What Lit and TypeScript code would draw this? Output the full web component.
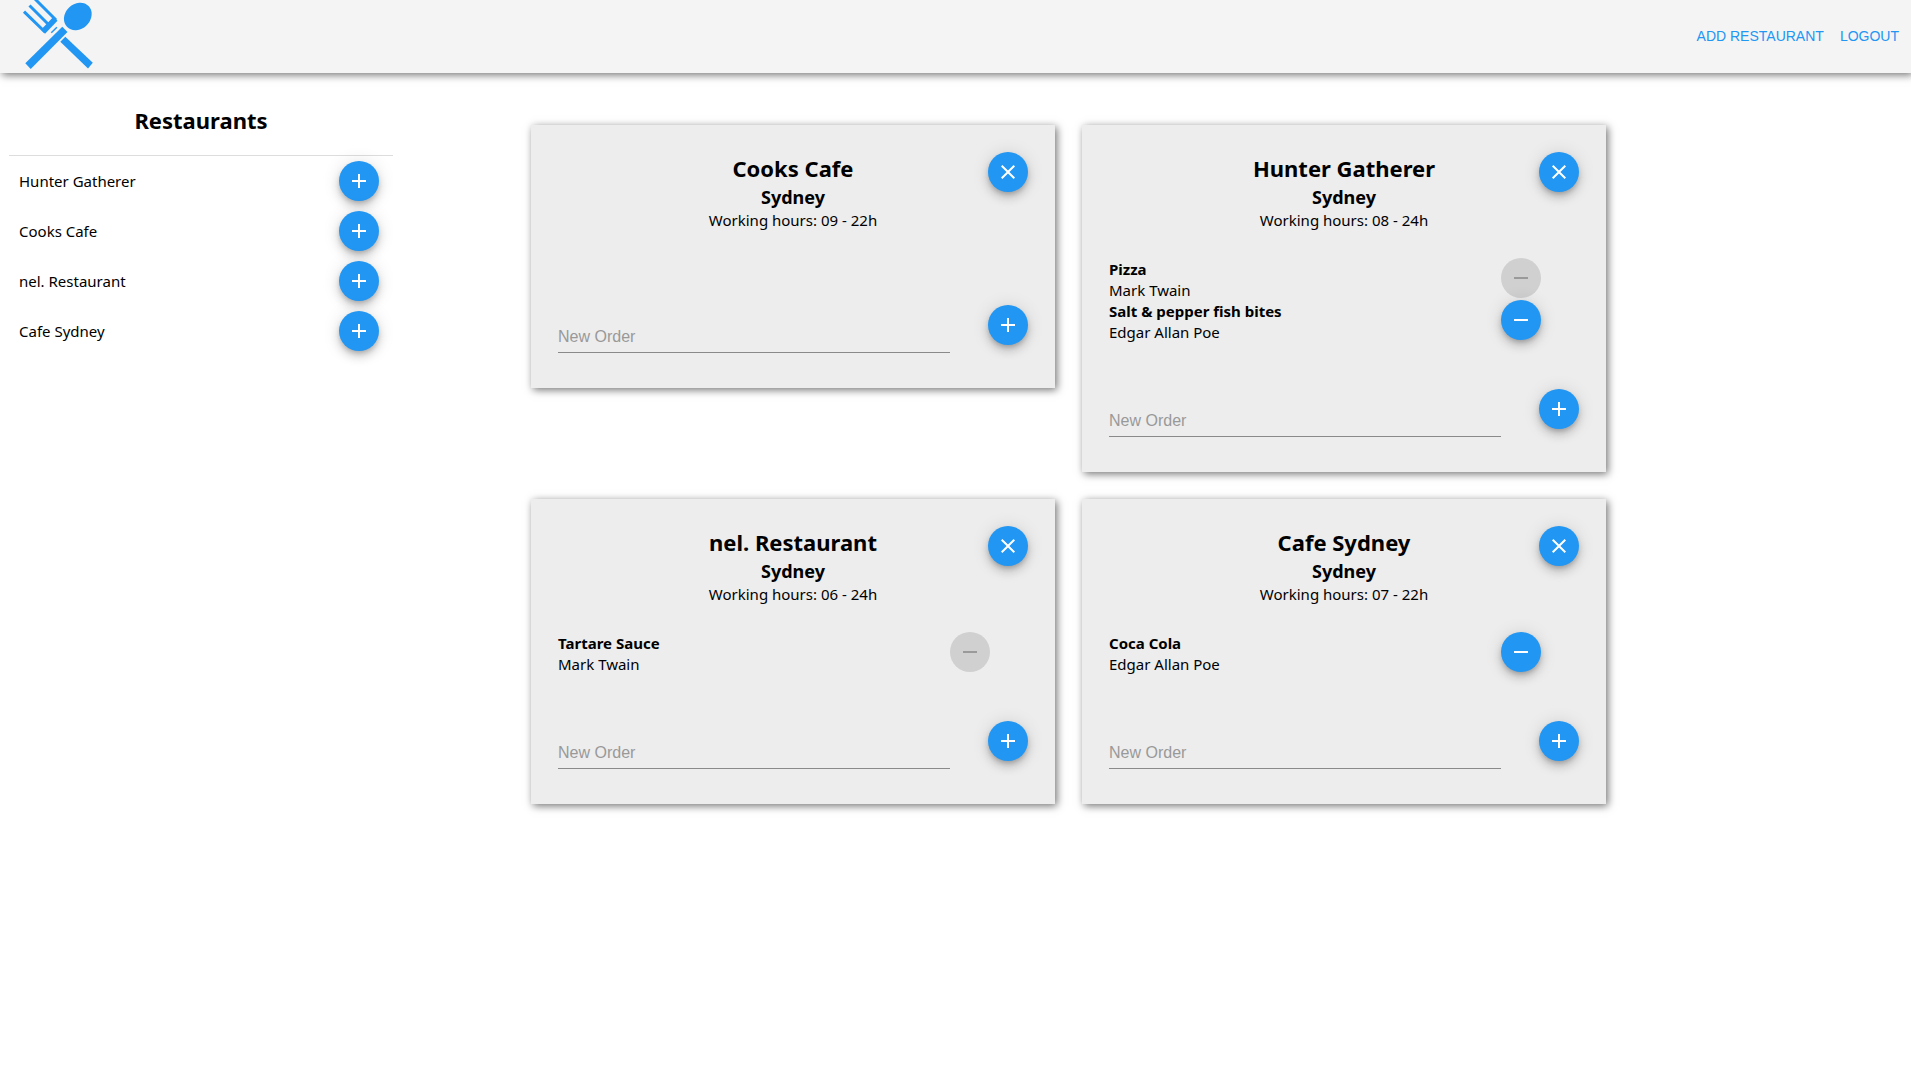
import { LitElement, html, css, svg } from "lit";
import { customElement, property } from "lit/decorators.js";

interface Order {
  meal: string;
  person: string;
  own: boolean;
}

interface Restaurant {
  name: string;
  city: string;
  hours: string;
  orders: Order[];
}

const RESTAURANTS: Restaurant[] = [
  { name: "Cooks Cafe", city: "Sydney", hours: "09 - 22h", orders: [] },
  {
    name: "Hunter Gatherer",
    city: "Sydney",
    hours: "08 - 24h",
    orders: [
      { meal: "Pizza", person: "Mark Twain", own: false },
      { meal: "Salt & pepper fish bites", person: "Edgar Allan Poe", own: true },
    ],
  },
  {
    name: "nel. Restaurant",
    city: "Sydney",
    hours: "06 - 24h",
    orders: [{ meal: "Tartare Sauce", person: "Mark Twain", own: false }],
  },
  {
    name: "Cafe Sydney",
    city: "Sydney",
    hours: "07 - 22h",
    orders: [{ meal: "Coca Cola", person: "Edgar Allan Poe", own: true }],
  },
];

const SIDEBAR_NAMES = ["Hunter Gatherer", "Cooks Cafe", "nel. Restaurant", "Cafe Sydney"];

const ICONS = {
  add: svg`<path d="M19 13h-6v6h-2v-6H5v-2h6V5h2v6h6z"/>`,
  remove: svg`<path d="M5 11h14v2H5z"/>`,
  close: svg`<path d="M19 6.4 17.6 5 12 10.6 6.4 5 5 6.4 10.6 12 5 17.6 6.4 19 12 13.4 17.6 19 19 17.6 13.4 12z"/>`,
};

@customElement("round-button")
export class RoundButton extends LitElement {
  @property() icon: keyof typeof ICONS = "add";
  @property() label = "";
  @property({ type: Boolean }) disabled = false;

  static styles = css`
    :host {
      display: block;
      flex: none;
      width: 40px;
      height: 40px;
    }
    .button {
      display: flex;
      align-items: center;
      justify-content: center;
      width: 40px;
      height: 40px;
      padding: 0;
      border: 0;
      border-radius: 50%;
      background: #2196f3;
      color: #fff;
      cursor: pointer;
      box-shadow:
        0 3px 5px -1px rgba(0, 0, 0, 0.2),
        0 6px 10px 0 rgba(0, 0, 0, 0.14),
        0 1px 18px 0 rgba(0, 0, 0, 0.12);
    }
    .button:disabled {
      background: rgba(0, 0, 0, 0.12);
      color: rgba(0, 0, 0, 0.26);
      box-shadow: none;
      cursor: default;
    }
    .icon {
      width: 24px;
      height: 24px;
      fill: currentColor;
    }
  `;

  render() {
    return html`
      <button class="button" aria-label=${this.label} ?disabled=${this.disabled}>
        <svg class="icon" viewBox="0 0 24 24" aria-hidden="true">${ICONS[this.icon]}</svg>
      </button>
    `;
  }
}

@customElement("restaurant-card")
export class RestaurantCard extends LitElement {
  @property({ attribute: false }) restaurant!: Restaurant;

  static styles = css`
    :host {
      display: block;
    }
    .card {
      padding: 27px;
      background: #ededed;
      box-shadow: 2px 2px 8px rgba(0, 0, 0, 0.55);
    }
    .top {
      display: grid;
      grid-template-columns: 40px 1fr 40px;
    }
    .heading {
      grid-column: 2;
      text-align: center;
    }
    .name {
      margin: 0;
      font-size: 22px;
      line-height: 32px;
    }
    .city {
      margin: 0;
      font-size: 18px;
      line-height: 26px;
    }
    .hours {
      margin: 0;
      line-height: 21px;
    }
    .orders {
      margin: 0;
      padding: 27px 0 47px;
      list-style: none;
    }
    .order {
      display: grid;
      grid-template-columns: 10fr 2fr;
      height: 42px;
    }
    .meal,
    .person {
      display: block;
      line-height: 21px;
    }
    .meal {
      padding-top: 1px;
      font-weight: bold;
    }
    .form {
      display: grid;
      grid-template-columns: 10fr 2fr;
      height: 56px;
    }
    .form round-button {
      justify-self: end;
    }
    .field {
      align-self: start;
      box-sizing: border-box;
      width: 100%;
      height: 33px;
      margin-top: 15px;
      padding: 2px 0 0;
      border: 0;
      border-bottom: 1px solid #8a8a8a;
      border-radius: 0;
      outline: 0;
      background: none;
      font: 16px "Liberation Sans", Arial, sans-serif;
    }
    .field::placeholder {
      color: #999;
      opacity: 1;
    }
  `;

  render() {
    const r = this.restaurant;
    return html`
      <article class="card">
        <header class="top">
          <div class="heading">
            <h2 class="name">${r.name}</h2>
            <h3 class="city">${r.city}</h3>
            <p class="hours">Working hours: ${r.hours}</p>
          </div>
          <round-button icon="close" label="Close"></round-button>
        </header>
        <ul class="orders">
          ${r.orders.map(
            (o) => html`
              <li class="order">
                <div>
                  <span class="meal">${o.meal}</span>
                  <span class="person">${o.person}</span>
                </div>
                <round-button icon="remove" label="Remove" ?disabled=${!o.own}></round-button>
              </li>
            `,
          )}
        </ul>
        <form class="form" @submit=${(e: Event) => e.preventDefault()}>
          <input class="field" type="text" placeholder="New Order" aria-label="New Order" />
          <round-button icon="add" label="Add"></round-button>
        </form>
      </article>
    `;
  }
}

@customElement("app-root")
export class AppRoot extends LitElement {
  static styles = css`
    :host {
      display: block;
      min-height: 100vh;
      background: #fff;
      color: #000;
      font: 15px "Segoe UI", "Noto Sans", "Open Sans", sans-serif;
    }
    .bar {
      display: flex;
      align-items: center;
      justify-content: space-between;
      height: 73px;
      padding: 0 12px 0 23px;
      background: #f4f4f4;
      box-shadow: 2px 2px 8px rgba(0, 0, 0, 0.55);
    }
    .brand,
    .logo {
      display: block;
    }
    .logo {
      width: 70px;
      height: 73px;
      overflow: visible;
      fill: #2196f3;
    }
    .tines {
      fill: none;
      stroke: #2196f3;
      stroke-width: 3;
    }
    .notch {
      fill: none;
      stroke: #2196f3;
      stroke-width: 1.5;
    }
    .nav {
      display: flex;
      gap: 16px;
      padding-bottom: 2px;
    }
    .link {
      color: #2196f3;
      font: 14px "Liberation Sans", Arial, sans-serif;
      text-decoration: none;
      text-transform: uppercase;
    }
    .page {
      display: grid;
      grid-template-columns: 384fr 138fr 1075fr 305fr;
      align-items: start;
      padding-left: 9px;
    }
    .sidebar {
      padding-top: 31px;
    }
    .title {
      margin: 0;
      padding-bottom: 19px;
      border-bottom: 1px solid #ddd;
      font-size: 22px;
      line-height: 32px;
      text-align: center;
    }
    .list {
      margin: 0;
      padding: 0;
      list-style: none;
    }
    .item {
      display: flex;
      align-items: center;
      justify-content: space-between;
      height: 50px;
      padding: 0 14px 0 10px;
    }
    .cards {
      grid-column: 3;
      display: grid;
      grid-template-columns: 1fr 1fr;
      gap: 27px;
      align-items: start;
      padding: 52px 0;
    }
  `;

  render() {
    return html`
      <header class="bar">
        <a class="brand" href="#" aria-label="Home">
          <svg class="logo" viewBox="23 0 70 73" aria-hidden="true">
            <path d="M25.300 63.300 62.300 26.700 67.500 31.900 30.700 69z" />
            <path d="M60.300 41.700 65.300 36.700 92.800 62.700 88 68.500z" />
            <ellipse cx="77.800" cy="16.400" rx="15" ry="12.500" transform="rotate(-44 77.800 16.400)" />
            <path d="M45 33.800 57.500 20.700 53.500 16.700 41 29.700z" />
            <path class="tines" d="M24 11.600 45 32M29.500 5.500 50 26M35 -1 56 20" />
            <path class="notch" d="M51.300 32.700 56.900 27.200" />
          </svg>
        </a>
        <nav class="nav">
          <a class="link" href="#">Add restaurant</a>
          <a class="link" href="#">Logout</a>
        </nav>
      </header>
      <main class="page">
        <aside class="sidebar">
          <h2 class="title">Restaurants</h2>
          <ul class="list">
            ${SIDEBAR_NAMES.map(
              (name) => html`
                <li class="item">
                  <span>${name}</span>
                  <round-button icon="add" label="Open ${name}"></round-button>
                </li>
              `,
            )}
          </ul>
        </aside>
        <section class="cards">
          ${RESTAURANTS.map((r) => html`<restaurant-card .restaurant=${r}></restaurant-card>`)}
        </section>
      </main>
    `;
  }
}
